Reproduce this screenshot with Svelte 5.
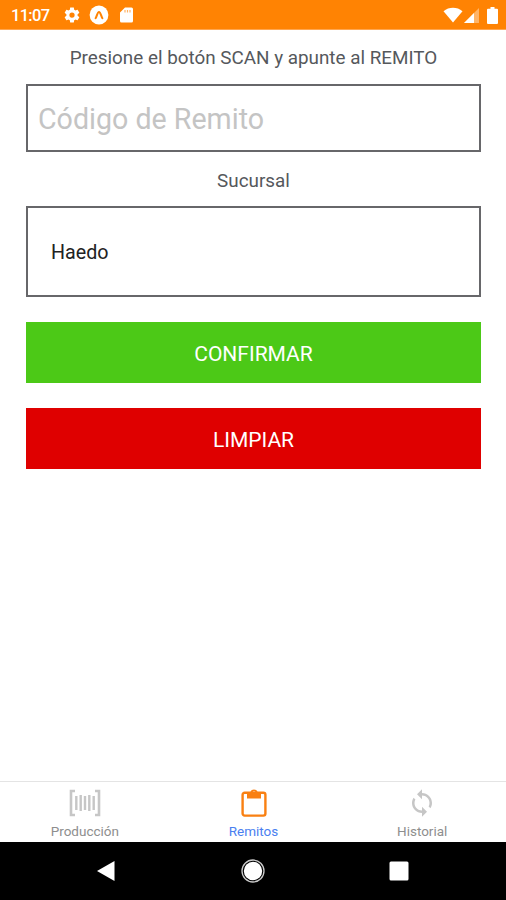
<script lang="ts">
  type Tab = 'produccion' | 'remitos' | 'historial';

  const tabs: { id: Tab; label: string }[] = [
    { id: 'produccion', label: 'Producción' },
    { id: 'remitos', label: 'Remitos' },
    { id: 'historial', label: 'Historial' },
  ];

  let activeTab = $state<Tab>('remitos');
  let codigo = $state('');
  const sucursal = 'Haedo';

  function limpiar() {
    codigo = '';
  }
</script>

<div class="screen">
  <header class="status-bar">
    <span class="time">11:07</span>
    <svg class="gear" width="18" height="18" viewBox="0 0 24 24" fill="#fff">
      <path
        fill-rule="evenodd"
        d="M19.43 12.98c.04-.32.07-.64.07-.98s-.03-.66-.07-.98l2.11-1.65c.19-.15.24-.42.12-.64l-2-3.46c-.12-.22-.39-.3-.61-.22l-2.49 1c-.52-.4-1.08-.73-1.69-.98l-.38-2.65C14.46 2.18 14.25 2 14 2h-4c-.25 0-.46.18-.49.42l-.38 2.65c-.61.25-1.17.59-1.69.98l-2.49-1c-.23-.09-.49 0-.61.22l-2 3.46c-.13.22-.07.49.12.64l2.11 1.65c-.04.32-.07.65-.07.98s.03.66.07.98l-2.11 1.65c-.19.15-.24.42-.12.64l2 3.46c.12.22.39.3.61.22l2.49-1c.52.4 1.08.73 1.69.98l.38 2.65c.03.24.24.42.49.42h4c.25 0 .46-.18.49-.42l.38-2.65c.61-.25 1.17-.59 1.69-.98l2.49 1c.23.09.49 0 .61-.22l2-3.46c.12-.22.07-.49-.12-.64l-2.11-1.65zM12 15.5a3.5 3.5 0 1 1 0-7 3.5 3.5 0 0 1 0 7z"
      />
    </svg>
    <svg class="expo" width="20" height="20" viewBox="0 0 20 20">
      <circle cx="10" cy="10" r="9.4" fill="#fff" />
      <path
        d="M6.6 13.2 C8 11.2 8.400 7 10 7 C11.600 7 12 11.200 13.400 13.200"
        fill="none"
        stroke="#ff8303"
        stroke-width="2"
        stroke-linecap="round"
      />
    </svg>
    <svg class="sd" width="14" height="16" viewBox="0 0 14 16">
      <path d="M5 .5h6.5A1.5 1.5 0 0 1 13 2v12a1.5 1.5 0 0 1-1.5 1.5h-10A1.5 1.500 0 0 1 0 14V5.5z" fill="#fff" />
      <path d="M5 3v2.5M7.5 3v2.5M10 3v2.5" stroke="#ffb366" stroke-width="1.2" />
    </svg>
    <span class="spacer"></span>
    <svg class="wifi" width="20" height="16" viewBox="0 0 20 16">
      <path d="M.5 4.2C6-.4 14-.4 19.5 4.2L10 15.5z" fill="#fff" />
    </svg>
    <svg class="signal" width="15" height="15" viewBox="0 0 15 15">
      <path d="M0 15 15 0v15z" fill="#fff" opacity=".4" />
      <path d="M0 15 10 5v10z" fill="#fff" />
    </svg>
    <svg class="battery" width="11" height="17" viewBox="0 0 11 17">
      <path d="M3.5 0h4v1.800H10a1 1 0 0 1 1 1V16a1 1 0 0 1-1 1H1a1 1 0 0 1-1-1V2.800a1 1 0 0 1 1-1h2.500z" fill="#fff" />
    </svg>
  </header>

  <main class="form">
    <p class="hint">Presione el botón SCAN y apunte al REMITO</p>
    <input class="codigo" type="text" placeholder="Código de Remito" bind:value={codigo} />
    <p class="label">Sucursal</p>
    <div class="sucursal">{sucursal}</div>
    <button type="button" class="btn confirmar">CONFIRMAR</button>
    <button type="button" class="btn limpiar" onclick={limpiar}>LIMPIAR</button>
  </main>

  <nav class="tabs">
    {#each tabs as tab (tab.id)}
      <button
        type="button"
        class="tab"
        class:active={activeTab === tab.id}
        onclick={() => (activeTab = tab.id)}
      >
        {#if tab.id === 'produccion'}
          <svg width="32" height="30" viewBox="0 0 32 30" fill="none" stroke="currentColor">
            <path d="M6 3H2v24h4M26 3h4v24h-4" stroke-width="2.6" />
            <path d="M7.3 8v14M16 8v14M24.700 8v14" stroke-width="2.4" />
            <path d="M11.7 7v16M20.3 7v16" stroke-width="2.4" />
          </svg>
        {:else if tab.id === 'remitos'}
          <svg width="32" height="30" viewBox="0 0 32 30">
            <rect x="4.600" y="4.800" width="22.800" height="22.800" rx="2" fill="none" stroke="currentColor" stroke-width="2.400" />
            <path
              fill="currentColor"
              fill-rule="evenodd"
              d="M9 4h3.300a4 4 0 0 1 7.400 0H23v6.500H9zM16 3.200a1.400 1.400 0 1 0 0 2.800 1.400 1.400 0 0 0 0-2.800z"
            />
          </svg>
        {:else}
          <svg width="30" height="30" viewBox="0 0 24 24">
            <path
              fill="currentColor"
              d="M12 4V1L8 5l4 4V6c3.310 0 6 2.690 6 6 0 1.010-.25 1.970-.7 2.800l1.460 1.460C19.540 15.030 20 13.570 20 12c0-4.420-3.580-8-8-8zm0 14c-3.310 0-6-2.690-6-6 0-1.010.25-1.970.7-2.800L5.240 7.740C4.460 8.970 4 10.430 4 12c0 4.420 3.580 8 8 8v3l4-4-4-4v3z"
            />
          </svg>
        {/if}
        <span>{tab.label}</span>
      </button>
    {/each}
  </nav>

  <footer class="android-nav">
    <svg width="20" height="22" viewBox="0 0 20 22">
      <path d="M18.5 1v20L1 11z" fill="#fff" />
    </svg>
    <svg width="24" height="24" viewBox="0 0 24 24">
      <circle cx="12" cy="12" r="9.2" fill="#fff" />
      <circle cx="12" cy="12" r="11" fill="none" stroke="#ccc" stroke-width="1.3" />
    </svg>
    <svg width="20" height="20" viewBox="0 0 20 20">
      <rect x=".5" y=".5" width="19" height="19" rx="1.5" fill="#fff" />
    </svg>
  </footer>
</div>

<style>
  :global(body) {
    background: #fff;
  }

  .screen {
    display: flex;
    flex-direction: column;
    width: 506px;
    height: 900px;
    overflow: hidden;
    background: #fff;
    font-family: Roboto, sans-serif;
  }

  .status-bar {
    display: flex;
    align-items: center;
    box-sizing: border-box;
    height: 30px;
    padding: 1px 8px 0 11px;
    background: #ff8303;
    border-bottom: 1px solid #ffa650;
  }

  .time {
    width: 52px;
    color: #fff;
    font-size: 16.5px;
    font-weight: 500;
    letter-spacing: -0.7px;
  }

  .expo {
    margin-left: 8px;
  }

  .sd {
    margin-left: 11px;
  }

  .spacer {
    flex: 1;
  }

  .signal {
    margin: 1px 8px 0 1px;
  }

  .form {
    display: flex;
    flex: 1;
    flex-direction: column;
    padding: 0 25px 0 26px;
  }

  .hint,
  .label {
    margin: 0;
    color: #55585c;
    font-size: 18.85px;
    line-height: 24px;
    text-align: center;
    white-space: nowrap;
  }

  .hint {
    margin-top: 16px;
  }

  .label {
    margin-top: 17px;
  }

  .codigo,
  .sucursal {
    box-sizing: border-box;
    width: 100%;
    border: 2px solid #67676a;
    background: #fff;
    font-family: inherit;
  }

  .codigo {
    height: 68px;
    margin-top: 14px;
    padding: 2px 10px 0;
    border-radius: 0;
    color: #222;
    font-size: 28.6px;
    outline: none;
  }

  .codigo::placeholder {
    color: #c4c4c4;
    opacity: 1;
  }

  .sucursal {
    display: flex;
    align-items: center;
    height: 91px;
    margin-top: 13px;
    padding: 2px 23px 0;
    color: #222;
    font-size: 19.7px;
  }

  .btn {
    height: 61px;
    margin-top: 25px;
    padding: 2px 0 0;
    border: 0;
    color: #fff;
    font-family: inherit;
    font-size: 21px;
  }

  .confirmar {
    background: #4cc917;
  }

  .limpiar {
    background: #df0000;
  }

  .tabs {
    display: flex;
    box-sizing: border-box;
    height: 61px;
    border-top: 1px solid #e4e4e4;
  }

  .tab {
    display: flex;
    flex: 1;
    flex-direction: column;
    align-items: center;
    padding: 6px 0 0 1px;
    border: 0;
    background: none;
    color: #c6c6c6;
    font-family: inherit;
  }

  .tab span {
    margin-top: 5px;
    color: #8e8e8e;
    font-size: 13.5px;
    line-height: 16px;
  }

  .tab.active {
    color: #f98012;
  }

  .tab.active span {
    color: #4a80f0;
  }

  .android-nav {
    display: flex;
    align-items: center;
    justify-content: space-between;
    box-sizing: border-box;
    height: 58px;
    padding: 0 97px 0 96px;
    background: #000;
  }
</style>
